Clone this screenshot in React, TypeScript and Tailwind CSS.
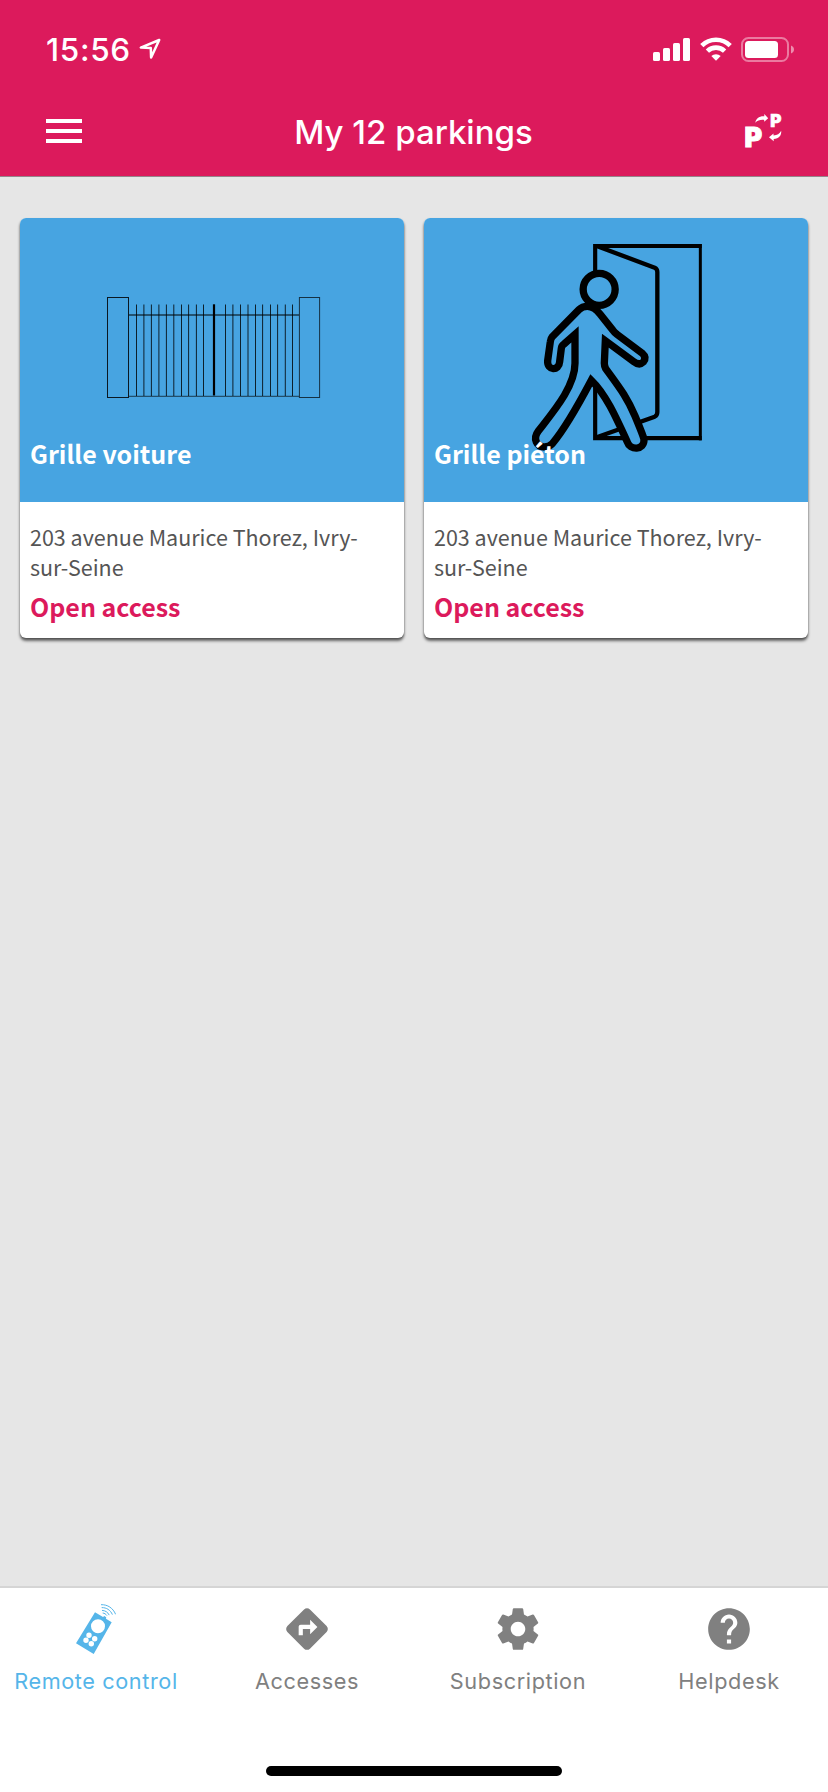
import React from 'react';
import { MdDirections, MdHelp } from 'react-icons/md';

const SignalIcon = () => (
  <svg width="37" height="23" viewBox="0 0 37 23" fill="currentColor">
    <rect x="0" y="14" width="7" height="9" rx="1.6" />
    <rect x="10" y="10" width="7" height="13" rx="1.6" />
    <rect x="20" y="5" width="7" height="18" rx="1.6" />
    <rect x="30" y="0" width="7" height="23" rx="1.6" />
  </svg>
);

const WifiIcon = () => (
  <svg width="32" height="24" viewBox="0 0 32 24" fill="none" stroke="currentColor" strokeWidth="4.6">
    <path d="M1.8 8.6a20.1 20.1 0 0 1 28.4 0" />
    <path d="M7.4 14.2a12.2 12.2 0 0 1 17.2 0" />
    <path d="M16 23.8l-4.7-4.7a6.8 6.8 0 0 1 9.4 0z" fill="currentColor" stroke="none" />
  </svg>
);

const BatteryIcon = () => (
  <svg width="53" height="25" viewBox="0 0 53 25">
    <rect x="1" y="1" width="46" height="23" rx="6.5" fill="none" stroke="white" strokeOpacity="0.42" strokeWidth="2" />
    <rect x="4" y="4" width="33" height="17" rx="3.5" fill="white" />
    <path d="M50 8.5c1.8.7 3 2.2 3 4s-1.200 3.300-3 4z" fill="white" fillOpacity="0.5" />
  </svg>
);

const LocationIcon = () => (
  <svg width="22" height="22" viewBox="0 0 22 22" fill="none" stroke="white" strokeWidth="2.5" strokeLinejoin="round">
    <path d="M20.200 2L1.800 9.600l10 .5.300 9.400z" />
  </svg>
);

const SwitchParkingIcon = () => (
  <svg width="38" height="36" viewBox="0 0 38 36" fill="white" className="overflow-visible font-['Inter',sans-serif] font-black">
    <text x="-0.500" y="34.300" fontSize="26.800" stroke="white" strokeWidth="1">P</text>
    <text x="25.200" y="13.700" fontSize="17" stroke="white" strokeWidth="0.6">P</text>
    <path d="M10.300 9.800c.700-4.600 3.900-6.900 9-6.600V1l3.900 4.300-4 3.500V6.900c-3.900-.3-6.500.4-8.900 2.900z" />
    <path d="M36.200 17.800c.4 5-2.200 7.800-7.500 8.200v2.200l-4.700-4 4.500-3.800v2.100c3.800-.2 6-1.600 7.700-4.700z" />
  </svg>
);

const RemoteIcon = () => (
  <svg width="40" height="50" viewBox="0 0 40 50" fill="currentColor">
    <path
      fillRule="evenodd"
      d="M19 8.300l8 4.600 1.400-.8 1.800 1.100-.2 1.600 5.700 3.500L17.700 50 0 39.300zM22 15.300a7 7 0 1 0 0 14 7 7 0 0 0 0-14zM13 28.600a2.700 2.700 0 1 0 0 5.400 2.700 2.700 0 0 0 0-5.400zM18.700 32a2.700 2.700 0 1 0 0 5.400 2.700 2.700 0 0 0 0-5.400zM10 33.600a2.700 2.700 0 1 0 0 5.400 2.700 2.700 0 0 0 0-5.400zM15.300 37a2.700 2.700 0 1 0 0 5.400 2.700 2.700 0 0 0 0-5.400z"
    />
    <g fill="none" stroke="currentColor" strokeWidth="1">
      <path d="M25 .7c6.500-.3 12 3.300 14.600 9.600" />
      <path d="M25.700 3.600c4.800-.1 8.700 2.400 10.700 7" />
      <path d="M26 6.400c3.200.1 5.800 1.700 7.200 4.700" />
      <path d="M26.700 9c1.800.2 3.200 1.100 4.200 2.600" />
    </g>
  </svg>
);

const SettingsIcon = () => (
  <svg width="50" height="50" viewBox="0 0 24 24" fill="currentColor">
    <path d="M19.43 12.98c.04-.32.07-.64.07-.98s-.03-.66-.07-.98l2.110-1.650c.19-.15.24-.42.12-.64l-2-3.460c-.12-.22-.39-.3-.61-.22l-2.490 1c-.52-.4-1.080-.73-1.690-.98l-.38-2.650C14.460 2.180 14.250 2 14 2h-4c-.25 0-.46.18-.49.42l-.38 2.650c-.61.25-1.170.59-1.690.98l-2.490-1c-.23-.09-.49 0-.61.22l-2 3.460c-.13.22-.07.49.12.64l2.110 1.650c-.04.32-.07.65-.07.98s.03.66.07.98l-2.110 1.650c-.19.15-.24.42-.12.64l2 3.460c.12.22.39.3.61.22l2.490-1c.52.4 1.080.73 1.690.98l.38 2.650c.03.24.24.42.49.42h4c.25 0 .46-.18.49-.42l.38-2.650c.61-.25 1.170-.59 1.690-.98l2.490 1c.23.09.49 0 .61-.22l2-3.460c.12-.22.07-.49-.12-.64l-2.110-1.650zM12 15.500c-1.930 0-3.500-1.570-3.500-3.500s1.570-3.500 3.500-3.500 3.500 1.570 3.500 3.500-1.570 3.500-3.500 3.500z" />
  </svg>
);

const bars = [
  116.500, 123.900, 131.400, 138.900, 146.400, 153.800, 161.500, 168.600, 176.400, 183.500,
  205.500, 212.900, 220.500, 228, 235.500, 242.600, 250.500, 257.600, 265.300, 272.500,
];

const GateDrawing = () => (
  <svg width="384" height="284" viewBox="0 0 384 284" fill="none" stroke="black">
    <rect x="87.500" y="79.500" width="21" height="100" strokeOpacity="0.85" />
    <rect x="279.400" y="79.500" width="20.200" height="100" strokeOpacity="0.7" />
    <path d="M109 97H279" strokeWidth="2" strokeOpacity="0.5" />
    <path d="M109 178.300H279" strokeOpacity="0.65" />
    {bars.map((x) => (
      <path key={x} d={`M${x} 86.500V178`} strokeWidth="0.9" strokeOpacity="0.9" />
    ))}
    <path d="M194 86.300V177.500" strokeWidth="2.200" />
  </svg>
);

const WalkerDrawing = () => (
  <svg width="384" height="284" viewBox="-258 24 1152 852" fill="none" stroke="black">
    <path d="M571 102V691" strokeWidth="9" />
    <path d="M575 108H255.500V684.500H575" strokeWidth="12.500" />
    <path d="M260 108L434 173Q442 177 442 186V606Q442 616 434 620L260 682" strokeWidth="13" />
    <path
      fill="#47a4e1"
      strokeWidth="22"
      strokeMiterlimit="8"
      d="M232 289C220 289 213 293 207 299L127 380Q122 386 121 395L113 452C111 482 147 484 149 455L154 415Q155 407 162 402L195 373V460C195 530 130 605 85 663Q72 680 79 696C87 714 112 716 127 701C155 668 205 585 244 511C285 550 315 615 351 694C360 722 403 722 402 688Q400 678 375 618C350 560 330 535 287 476Q283 468 283 460L286 392L370 454Q388 468 400 456Q411 442 396 429L322 374Q312 366 308 360L270 312Q252 289 232 289Z"
    />
    <circle cx="267.500" cy="238" r="48" strokeWidth="22" fill="#47a4e1" />
  </svg>
);

const parkings = [
  { name: 'Grille voiture', drawing: <GateDrawing /> },
  { name: 'Grille piéton', drawing: <WalkerDrawing /> },
];

const tabs = [
  { label: 'Remote control', icon: <RemoteIcon />, active: true },
  { label: 'Accesses', icon: <MdDirections size={50} /> },
  { label: 'Subscription', icon: <SettingsIcon /> },
  { label: 'Helpdesk', icon: <MdHelp size={50} /> },
];

const App = () => {
  return (
    <div className="flex h-[1792px] w-[828px] flex-col overflow-hidden bg-[#e6e6e6] font-['Inter',sans-serif]">
      <header className="h-[177px] shrink-0 border-b border-[#96848b] bg-[#dc1a5c] text-white">
        <div className="flex h-[98px] items-center justify-between pl-[46px] pr-[34px]">
          <div className="flex items-center">
            <span className="w-[93px] pt-[2px] text-[31.5px] leading-10 font-[550] tracking-[0.7px]">15:56</span>
            <LocationIcon />
          </div>
          <div className="flex items-center">
            <SignalIcon />
            <div className="ml-[10px]"><WifiIcon /></div>
            <div className="ml-[9px]"><BatteryIcon /></div>
          </div>
        </div>
        <div className="flex h-[66px] items-center justify-between pl-[46px] pr-[45px]">
          <div className="flex w-9 flex-col gap-[6px]">
            <span className="h-1 bg-white" />
            <span className="h-1 bg-white" />
            <span className="h-1 bg-white" />
          </div>
          <h1 className="pt-[2px] text-[33px] leading-10 font-[550]">My 12 parkings</h1>
          <SwitchParkingIcon />
        </div>
      </header>

      <main className="flex grow items-start gap-5 px-5 pt-[41px] font-['Noto_Sans_CJK_JP',sans-serif]">
        {parkings.map((parking) => (
          <div
            key={parking.name}
            className="h-[420px] w-96 overflow-hidden rounded-md bg-white shadow-[0_3px_3px_rgba(0,0,0,0.55),0_1px_2px_rgba(0,0,0,0.25)]"
          >
            <div className="relative h-[284px] bg-[#47a4e1]">
              {parking.drawing}
              <h2 className="absolute bottom-[31px] left-[10px] text-[25px] leading-9 font-bold text-white">{parking.name}</h2>
            </div>
            <div className="px-[10px] pt-5">
              <p className="text-[21.5px] leading-[30px] text-[#555]">
                203 avenue Maurice Thorez, Ivry-
                <br />
                sur-Seine
              </p>
              <p className="mt-[6px] text-[25px] leading-9 font-bold text-[#dc1a5c]">Open access</p>
            </div>
          </div>
        ))}
      </main>

      <nav className="h-[206px] shrink-0 border-t-2 border-[#d5d5d5] bg-white">
        <div className="-ml-[9.5px] grid w-[844px] grid-cols-4 pt-4">
          {tabs.map((tab) => (
            <div
              key={tab.label}
              className={`flex flex-col items-center ${tab.active ? 'text-[#55b5e9]' : 'text-[#808080]'}`}
            >
              <div className="flex h-[50px] items-center">{tab.icon}</div>
              <span className="mt-[11px] text-[21.7px] leading-8 tracking-[0.6px] whitespace-nowrap">{tab.label}</span>
            </div>
          ))}
        </div>
        <div className="mx-auto mt-[69px] h-[10px] w-[296px] rounded-full bg-black" />
      </nav>
    </div>
  );
};

export default App;
